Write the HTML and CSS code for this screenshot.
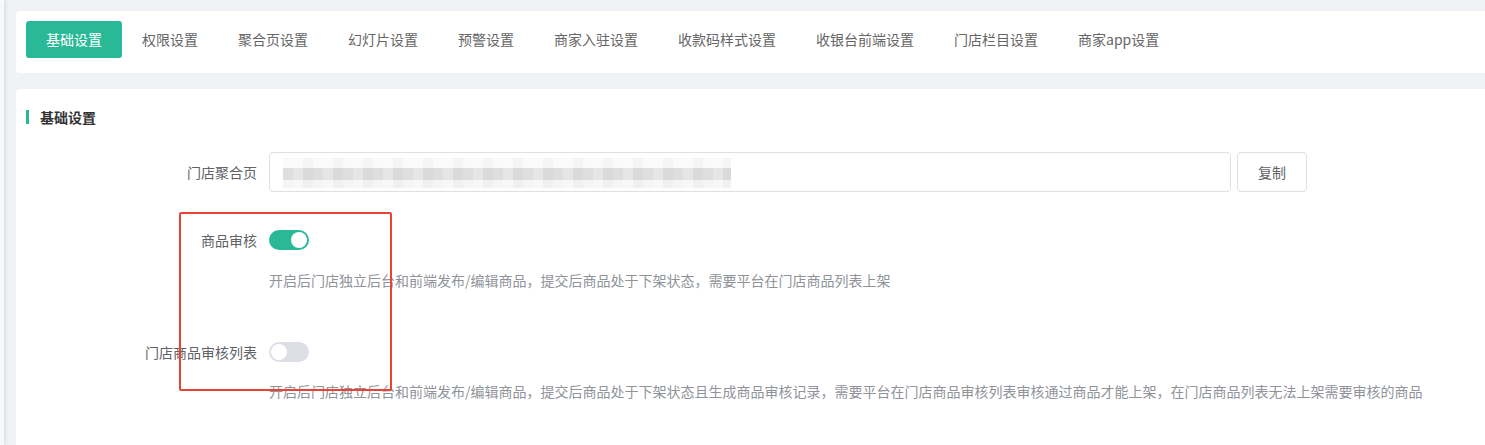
FILE: index.html
```html
<!DOCTYPE html>
<html>
	<head>
		<meta charset="utf-8">
		<meta name="viewport" content="width=device-width, initial-scale=1.0">
		<title>基础设置</title>
		<link rel="stylesheet" href="styles.css">
	</head>
	<body>
		<div class="layout">
			<div class="side"></div>
			<div class="main">
				<div class="tabs">
					<span class="tab active">基础设置</span>
					<span class="tab">权限设置</span>
					<span class="tab">聚合页设置</span>
					<span class="tab">幻灯片设置</span>
					<span class="tab">预警设置</span>
					<span class="tab">商家入驻设置</span>
					<span class="tab">收款码样式设置</span>
					<span class="tab">收银台前端设置</span>
					<span class="tab">门店栏目设置</span>
					<span class="tab">商家app设置</span>
				</div>

				<div class="panel">
					<div class="title">基础设置</div>

					<div class="form">
						<div class="row">
							<label class="label">门店聚合页</label>
							<div class="field">
								<div class="input"><span class="blur"></span></div>
								<button type="button" class="btn">复制</button>
							</div>
						</div>

						<div class="row row-switch">
							<label class="label">商品审核</label>
							<div class="field">
								<span class="switch on"></span>
							</div>
						</div>
						<div class="tip">开启后门店独立后台和前端发布/编辑商品，提交后商品处于下架状态，需要平台在门店商品列表上架</div>

						<div class="row row-switch row-gap">
							<label class="label">门店商品审核列表</label>
							<div class="field">
								<span class="switch"></span>
							</div>
						</div>
						<div class="tip tip-last">开启后门店独立后台和前端发布/编辑商品，提交后商品处于下架状态且生成商品审核记录，需要平台在门店商品审核列表审核通过商品才能上架，在门店商品列表无法上架需要审核的商品</div>
					</div>

					<!-- 标注框 -->
					<div class="mark"></div>
				</div>
			</div>
		</div>
	</body>
</html>
```

FILE: styles.css
```css
*{
	box-sizing: border-box;
}
body{
	margin: 0;
	background-color: #f0f2f5;
	font-family: "Noto Sans CJK SC", "Microsoft YaHei", sans-serif;
	font-size: 14px;
	color: #606266;
}
.layout{
	display: flex;
	height: 445px;
	overflow: hidden;
}
.side{
	width: 4px;
	flex-shrink: 0;
	background-color: #f7f8fa;
	box-shadow: 1px 0 4px rgba(0, 0, 0, .12);
}
.main{
	flex: 1;
	padding: 11px 0 0 12px;
}

/* 顶部tab */
.tabs{
	display: flex;
	height: 62px;
	padding: 10px;
	background-color: #fff;
	border-radius: 4px 0 0 4px;
}
.tab{
	padding: 0 20px;
	height: 37px;
	line-height: 37px;
	color: #666;
	border-radius: 3px;
}
.tab.active{
	background-color: #2ab997;
	color: #fff;
}

/* 内容 */
.panel{
	position: relative;
	margin-top: 16px;
	height: 400px;
	padding-top: 20px;
	background-color: #fff;
	border-radius: 4px 0 0 4px;
}
.title{
	margin: 1px 0 0 10px;
	padding-left: 11px;
	border-left: 3px solid #2ab997;
	height: 14px;
	line-height: 14px;
	font-weight: bold;
	color: #333;
}
.form{
	padding-left: 121px;
	margin-top: 28px;
}
.row{
	display: flex;
	align-items: center;
}
.label{
	width: 132px;
	padding-right: 12px;
	text-align: right;
	line-height: 20px;
	white-space: nowrap;
}
.field{
	display: flex;
	align-items: center;
}
.input{
	width: 962px;
	height: 40px;
	padding: 5px 0 0 13px;
	border: 1px solid #dcdfe6;
	border-radius: 4px;
}
.blur{
	display: block;
	width: 448px;
	height: 30px;
	background:
		repeating-linear-gradient(90deg, rgba(255,255,255,0) 0 10px, rgba(255,255,255,.25) 10px 20px, rgba(0,0,0,.02) 20px 30px),
		linear-gradient(#fafafa 0 10px, #dedede 10px 22px, #f5f5f5 22px 30px);
}
.btn{
	margin-left: 6px;
	width: 70px;
	height: 40px;
	border: 1px solid #dcdfe6;
	border-radius: 4px;
	background-color: #fff;
	font-family: inherit;
	font-size: 14px;
	color: #606266;
}

/* 开关 */
.row-switch{
	margin-top: 38px;
}
.row-gap{
	margin-top: 52px;
}
.switch{
	position: relative;
	display: inline-block;
	width: 40px;
	height: 20px;
	border-radius: 10px;
	background-color: #dcdfe6;
}
.switch::after{
	content: '';
	position: absolute;
	top: 2px;
	left: 2px;
	width: 16px;
	height: 16px;
	border-radius: 50%;
	background-color: #fff;
}
.switch.on{
	background-color: #2ab997;
}
.switch.on::after{
	left: 22px;
}
.tip{
	margin: 20px 0 0 132px;
	line-height: 20px;
	color: #909399;
	white-space: nowrap;
}
.tip-last{
	margin-top: 19px;
}

/* 红色标注 */
.mark{
	position: absolute;
	left: 163px;
	top: 123px;
	width: 213px;
	height: 179px;
	border: 2px solid #ea4335;
	border-radius: 2px;
}
```
